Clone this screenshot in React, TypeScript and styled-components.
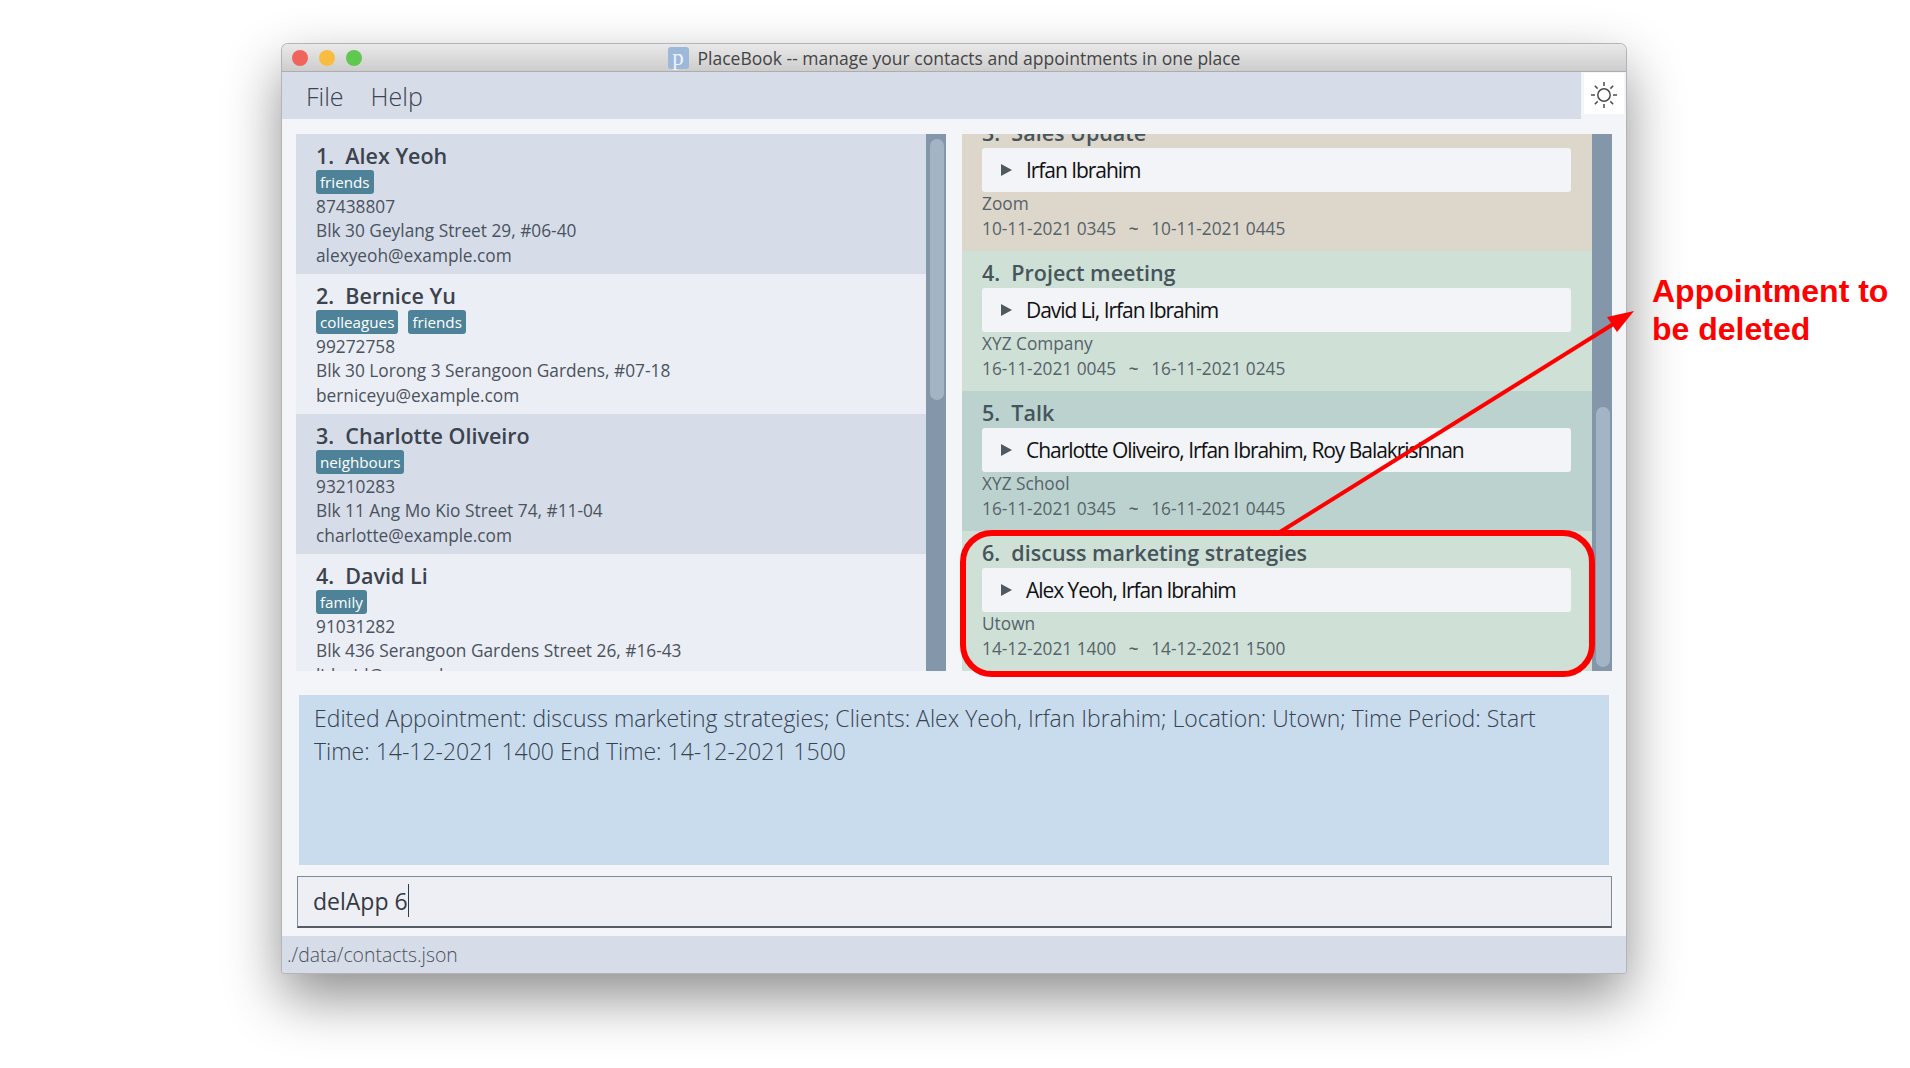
import styled, { createGlobalStyle } from "styled-components"

const GlobalStyle = createGlobalStyle`
    html, body {
        margin: 0;
        padding: 0;
        background: #ffffff;
    }
    * {
        box-sizing: border-box;
    }
`

const Canvas = styled.div`
    position: relative;
    width: 1910px;
    height: 1068px;
    padding: 44px 0 0 282px;
    overflow: hidden;
    background: #ffffff;
    font-family: "Open Sans", sans-serif;
`
const Window = styled.div`
    width: 1344px;
    height: 929px;
    display: flex;
    flex-direction: column;
    background: #f3f5f9;
    border-radius: 6px 6px 3px 3px;
    box-shadow: 0 0 0 1px #b4b4b8, 0 24px 56px rgba(0, 0, 0, 0.45);
`
const TitleBar = styled.div`
    height: 28px;
    flex: none;
    position: relative;
    display: flex;
    align-items: center;
    justify-content: center;
    gap: 9px;
    background: linear-gradient(#e9e9e9, #cdcdcd);
    border-bottom: 1px solid #adadad;
    border-radius: 6px 6px 0 0;
`
const Lights = styled.div`
    position: absolute;
    left: 10px;
    top: 6px;
    display: flex;
    gap: 11px;
`
const Light = styled.span<{ color: string }>`
    width: 16px;
    height: 16px;
    border-radius: 50%;
    background: ${props => props.color};
`
const AppIcon = styled.span`
    width: 21px;
    height: 22px;
    display: flex;
    align-items: center;
    justify-content: center;
    border-radius: 3px;
    background: #9db8d9;
    color: #eef3f9;
    font-family: "Liberation Serif", serif;
    font-size: 23px;
    line-height: 20px;
`
const WindowTitle = styled.span`
    font-size: 17.5px;
    color: #444444;
    white-space: nowrap;
`
const MenuRow = styled.div`
    height: 47px;
    flex: none;
    display: flex;
`
const MenuBar = styled.div`
    flex: 1;
    display: flex;
    align-items: center;
    gap: 27px;
    padding-left: 24px;
    background: #d6dde9;
`
const MenuItem = styled.span`
    font-size: 25px;
    font-weight: 300;
    color: #3c4450;
`
const ThemeButton = styled.div`
    width: 40px;
    height: 41px;
    margin: 1px 2px 0 3px;
    padding-top: 2px;
    display: flex;
    align-items: center;
    justify-content: center;
    background: #ffffff;
`
const Lists = styled.div`
    height: 537px;
    flex: none;
    margin-top: 15px;
    padding: 0 14px;
    display: flex;
    gap: 16px;
`
const ListPane = styled.div`
    width: 650px;
    display: flex;
    overflow: hidden;
`
const ListBody = styled.div<{ shift?: number }>`
    flex: 1;
    overflow: hidden;
    & > div:first-child {
        margin-top: ${props => props.shift ? props.shift : 0}px;
    }
`
const ScrollTrack = styled.div`
    width: 20px;
    flex: none;
    padding: 0 2px 0 4px;
    background: #8497aa;
`
const ScrollThumb = styled.div<{ top: number, size: number }>`
    height: ${props => props.size}px;
    margin-top: ${props => props.top}px;
    border-radius: 7px;
    background: #a3b5c5;
`
const ContactCard = styled.div<{ odd: boolean }>`
    height: 140px;
    padding: 8px 0 0 20px;
    background: ${props => props.odd ? "#d6dde9" : "#ebeef4"};
    overflow: hidden;
`
const Name = styled.div`
    height: 28px;
    font-size: 21.5px;
    line-height: 28px;
    font-weight: 600;
    color: #3b434e;
    white-space: pre;
`
const Tags = styled.div`
    height: 25px;
    display: flex;
    gap: 10px;
    padding-bottom: 1px;
`
const Tag = styled.span`
    padding: 0 4px;
    border-radius: 3px;
    background: #4e8299;
    color: #ffffff;
    font-size: 15.2px;
    line-height: 24px;
`
const Detail = styled.div`
    height: 24.4px;
    font-size: 17.3px;
    line-height: 24px;
    color: #4a525d;
    white-space: pre;
`
const AppointmentCard = styled.div<{ bg: string }>`
    height: 140px;
    padding: 8px 21px 0 20px;
    background: ${props => props.bg};
    overflow: hidden;
`
const AppointmentTitle = styled.div`
    height: 29px;
    font-size: 21.5px;
    line-height: 28px;
    font-weight: 600;
    color: #46555c;
    white-space: pre;
`
const ClientBox = styled.div`
    height: 44px;
    display: flex;
    align-items: center;
    gap: 14px;
    padding-left: 19px;
    border-radius: 3px;
    background: #f2f4f8;
`
const ClientArrow = styled.span`
    width: 0;
    height: 0;
    border-style: solid;
    border-width: 6px 0 6px 11px;
    border-color: transparent transparent transparent #505860;
`
const Clients = styled.span`
    font-size: 21px;
    letter-spacing: -1.05px;
    color: #111111;
    white-space: nowrap;
`
const AppointmentInfo = styled.div`
    height: 24.4px;
    font-size: 17.3px;
    line-height: 24px;
    color: #56626a;
    white-space: pre;
    display: flex;
    align-items: center;
`
const Tilde = styled.span`
    width: 35px;
    text-align: center;
    font-weight: 600;
`
const ResultBox = styled.div`
    height: 170px;
    flex: none;
    margin: 24px 17px 0;
    padding: 7px 15px 0;
    background: #c8dcee;
    font-size: 23px;
    font-weight: 300;
    line-height: 33px;
    color: #38424e;
`
const CommandBox = styled.div`
    height: 52px;
    flex: none;
    margin: 11px 14px 0 15px;
    padding: 0 0 2px 15px;
    display: flex;
    align-items: center;
    background: #eeeff5;
    border: 1px solid #7e8b99;
    border-bottom: 2px solid #565c66;
    font-size: 23px;
    color: #333a44;
`
const Caret = styled.span`
    width: 1px;
    height: 33px;
    background: #333a44;
`
const StatusBar = styled.div`
    height: 37px;
    flex: none;
    margin-top: 8px;
    padding-left: 5px;
    display: flex;
    align-items: center;
    background: #d6dde9;
    border-radius: 0 0 3px 3px;
    font-size: 19.4px;
    font-weight: 300;
    color: #4a525d;
`
const Highlight = styled.div`
    position: absolute;
    left: 960px;
    top: 530px;
    width: 635px;
    height: 147px;
    border: 6px solid #ff0000;
    border-radius: 32px;
    pointer-events: none;
`
const ArrowLayer = styled.svg`
    position: absolute;
    left: 0;
    top: 0;
    pointer-events: none;
`
const Callout = styled.div`
    position: absolute;
    left: 1652px;
    top: 272px;
    font-family: "Liberation Sans", sans-serif;
    font-size: 32px;
    font-weight: bold;
    line-height: 38px;
    color: #ff0000;
    white-space: nowrap;
`

const contacts = [
    { name: "1.  Alex Yeoh", tags: ["friends"], phone: "87438807", address: "Blk 30 Geylang Street 29, #06-40", email: "alexyeoh@example.com" },
    { name: "2.  Bernice Yu", tags: ["colleagues", "friends"], phone: "99272758", address: "Blk 30 Lorong 3 Serangoon Gardens, #07-18", email: "berniceyu@example.com" },
    { name: "3.  Charlotte Oliveiro", tags: ["neighbours"], phone: "93210283", address: "Blk 11 Ang Mo Kio Street 74, #11-04", email: "charlotte@example.com" },
    { name: "4.  David Li", tags: ["family"], phone: "91031282", address: "Blk 436 Serangoon Gardens Street 26, #16-43", email: "lidavid@example.com" },
]

const appointments = [
    { title: "3.  Sales Update", clients: "Irfan Ibrahim", place: "Zoom", start: "10-11-2021 0345", end: "10-11-2021 0445", bg: "#ddd6cb" },
    { title: "4.  Project meeting", clients: "David Li, Irfan Ibrahim", place: "XYZ Company", start: "16-11-2021 0045", end: "16-11-2021 0245", bg: "#cfe0d6" },
    { title: "5.  Talk", clients: "Charlotte Oliveiro, Irfan Ibrahim, Roy Balakrishnan", place: "XYZ School", start: "16-11-2021 0345", end: "16-11-2021 0445", bg: "#bcd2ce" },
    { title: "6.  discuss marketing strategies", clients: "Alex Yeoh, Irfan Ibrahim", place: "Utown", start: "14-12-2021 1400", end: "14-12-2021 1500", bg: "#cfe0d6" },
]

function SunIcon() {
    const rays = [0, 45, 90, 135, 180, 225, 270, 315]
    return (
        <svg width="28" height="28" viewBox="0 0 28 28" fill="none" stroke="#4c4c4c" strokeWidth="1.5">
            <circle cx="14" cy="14" r="6.2" />
            {rays.map((angle) => (
                <line key={angle} x1="14" y1="1" x2="14" y2="5" transform={`rotate(${angle} 14 14)`} />
            ))}
        </svg>
    )
}

export default function App() {
    return (
        <Canvas>
            <GlobalStyle />
            <Window>
                <TitleBar>
                    <Lights>
                        <Light color="#f1645e" />
                        <Light color="#f8bd40" />
                        <Light color="#5fc850" />
                    </Lights>
                    <AppIcon>p</AppIcon>
                    <WindowTitle>PlaceBook -- manage your contacts and appointments in one place</WindowTitle>
                </TitleBar>
                <MenuRow>
                    <MenuBar>
                        <MenuItem>File</MenuItem>
                        <MenuItem>Help</MenuItem>
                    </MenuBar>
                    <ThemeButton>
                        <SunIcon />
                    </ThemeButton>
                </MenuRow>
                <Lists>
                    <ListPane>
                        <ListBody>
                            {contacts.map((person, index) => (
                                <ContactCard key={person.name} odd={index % 2 === 0}>
                                    <Name>{person.name}</Name>
                                    <Tags>
                                        {person.tags.map((tag) => <Tag key={tag}>{tag}</Tag>)}
                                    </Tags>
                                    <Detail>{person.phone}</Detail>
                                    <Detail>{person.address}</Detail>
                                    <Detail>{person.email}</Detail>
                                </ContactCard>
                            ))}
                        </ListBody>
                        <ScrollTrack>
                            <ScrollThumb top={5} size={261} />
                        </ScrollTrack>
                    </ListPane>
                    <ListPane>
                        <ListBody shift={-23}>
                            {appointments.map((item) => (
                                <AppointmentCard key={item.title} bg={item.bg}>
                                    <AppointmentTitle>{item.title}</AppointmentTitle>
                                    <ClientBox>
                                        <ClientArrow />
                                        <Clients>{item.clients}</Clients>
                                    </ClientBox>
                                    <AppointmentInfo>{item.place}</AppointmentInfo>
                                    <AppointmentInfo>
                                        {item.start}
                                        <Tilde>~</Tilde>
                                        {item.end}
                                    </AppointmentInfo>
                                </AppointmentCard>
                            ))}
                        </ListBody>
                        <ScrollTrack>
                            <ScrollThumb top={273} size={260} />
                        </ScrollTrack>
                    </ListPane>
                </Lists>
                <ResultBox>
                    Edited Appointment: discuss marketing strategies; Clients: Alex Yeoh, Irfan Ibrahim; Location: Utown; Time Period: Start Time: 14-12-2021 1400 End Time: 14-12-2021 1500
                </ResultBox>
                <CommandBox>
                    delApp 6
                    <Caret />
                </CommandBox>
                <StatusBar>./data/contacts.json</StatusBar>
            </Window>
            <Highlight />
            <ArrowLayer width="1910" height="1068" viewBox="0 0 1910 1068">
                <line x1="1280" y1="532" x2="1615" y2="323" stroke="#ff0000" strokeWidth="4" />
                <polygon points="1634,311 1607,317 1617,332" fill="#ff0000" />
            </ArrowLayer>
            <Callout>
                Appointment to
                <br />
                be deleted
            </Callout>
        </Canvas>
    )
}
